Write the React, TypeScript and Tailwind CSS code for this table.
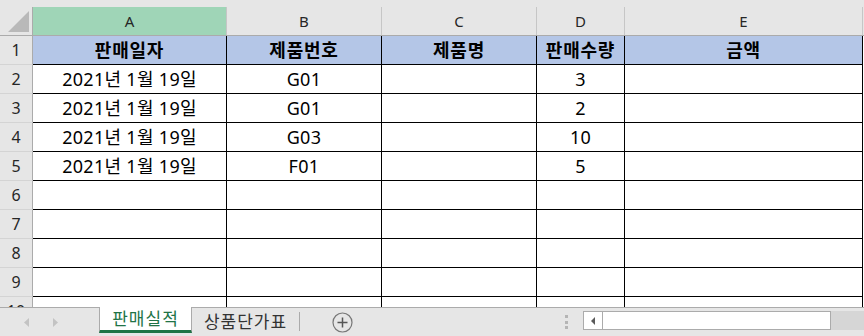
import { Fragment } from 'react';

const cols = ['A', 'B', 'C', 'D', 'E'];
const colW = ['w-[194px]', 'w-[155px]', 'w-[155px]', 'w-[88px]', 'w-[238px]'];

const header = ['판매일자', '제품번호', '제품명', '판매수량', '금액'];

const data: string[][] = [
  ['2021년 1월 19일', 'G01', '', '3', ''],
  ['2021년 1월 19일', 'G01', '', '2', ''],
  ['2021년 1월 19일', 'G03', '', '10', ''],
  ['2021년 1월 19일', 'F01', '', '5', ''],
  ['', '', '', '', ''],
  ['', '', '', '', ''],
  ['', '', '', '', ''],
  ['', '', '', '', ''],
  ['', '', '', '', ''],
];

function RowHead({ n }: { n: number }) {
  return (
    <div className="flex w-[33px] shrink-0 items-center justify-center border-r border-b border-r-[#ababab] border-b-[#d4d4d4] bg-[#e6e6e6] text-[16px] text-[#262626]">
      {n}
    </div>
  );
}

export default function App() {
  return (
    <div className="h-[336px] w-[864px] overflow-hidden bg-white font-['Noto_Sans','Noto_Sans_CJK_KR',sans-serif] text-black">
      {/* 시트 영역 */}
      <div className="h-[307px] overflow-hidden">
        <div className="h-[7px] bg-[#e6e6e6]" />

        {/* 열 머리글 */}
        <div className="flex h-[29px] border-b border-[#ababab] bg-[#e6e6e6]">
          <div className="relative w-[33px] shrink-0 border-r border-[#ababab]">
            <svg className="absolute left-0 top-0" width="32" height="28" viewBox="0 0 32 28">
              <polygon points="8,25 29,25 29,4" fill="#b9b9b9" />
            </svg>
          </div>
          {cols.map((c, i) => (
            <div
              key={c}
              className={`${colW[i]} shrink-0 flex items-center justify-center border-r border-[#c6c6c6] text-[15px] text-[#262626] ${
                i === 0 ? 'bg-[#9fd5b7]' : ''
              }`}
            >
              {c}
            </div>
          ))}
          <div className="flex-1" />
        </div>

        {/* 1행: 제목 */}
        <div className="flex h-[29px]">
          <RowHead n={1} />
          {header.map((h, i) => (
            <div
              key={h}
              className={`${colW[i]} shrink-0 flex items-center justify-center border-r border-b border-black bg-[#b4c6e7] text-[18px] font-bold tracking-[0.8px]`}
            >
              {h}
            </div>
          ))}
          <div className="flex-1" />
        </div>

        {data.map((row, r) => (
          <div key={r} className="flex h-[29px]">
            <RowHead n={r + 2} />
            {row.map((v, i) => (
              <div
                key={i}
                className={`${colW[i]} shrink-0 flex items-center justify-center border-r border-b border-black text-[18px] tracking-[0.3px]`}
              >
                {v}
              </div>
            ))}
            <div className="flex-1" />
          </div>
        ))}
      </div>

      {/* 시트 탭 */}
      <div className="flex h-[29px] border-t border-[#ababab] bg-[#e6e6e6]">
        <div className="flex w-[99px] shrink-0 items-center">
          <svg className="ml-[24px]" width="5" height="9" viewBox="0 0 5 9">
            <polygon points="5,0 5,9 0,4.5" fill="#c3c3c3" />
          </svg>
          <svg className="ml-[24px]" width="5" height="9" viewBox="0 0 5 9">
            <polygon points="0,0 0,9 5,4.5" fill="#c3c3c3" />
          </svg>
        </div>
        <div className="-mt-px flex h-[26px] w-[93px] shrink-0 items-center justify-center border-x border-b-[3px] border-x-[#ababab] border-b-[#217346] bg-white text-[17px] tracking-[1px] text-[#217346]">
          판매실적
        </div>
        <div className="flex w-[107px] shrink-0 items-center justify-center text-[17px] tracking-[1px] text-[#333333]">
          상품단가표
        </div>
        <div className="mt-[4px] h-[19px] w-px shrink-0 bg-[#ababab]" />
        <div className="ml-[32px] flex items-center">
          <svg width="21" height="21" viewBox="0 0 21 21">
            <circle cx="10.5" cy="10.5" r="9.5" fill="none" stroke="#777777" strokeWidth="1.2" />
            <path d="M10.5 5.5v10M5.5 10.5h10" stroke="#555555" strokeWidth="1.5" />
          </svg>
        </div>
        <div className="ml-[212px] flex flex-col justify-center gap-[2.5px]">
          <div className="h-[3px] w-[3px] bg-[#b5b5b5]" />
          <div className="h-[3px] w-[3px] bg-[#b5b5b5]" />
          <div className="h-[3px] w-[3px] bg-[#b5b5b5]" />
        </div>
        <div className="ml-[15px] mt-[3px] flex h-[19px] flex-1 bg-[#d6d6d6]">
          <div className="flex w-[20px] shrink-0 items-center justify-center border border-[#ababab] bg-white">
            <svg width="4" height="8" viewBox="0 0 4 8">
              <polygon points="4,0 4,8 0,4" fill="#5a5a5a" />
            </svg>
          </div>
          <div className="w-[228px] shrink-0 border border-l-0 border-[#ababab] bg-white" />
        </div>
      </div>
    </div>
  );
}
